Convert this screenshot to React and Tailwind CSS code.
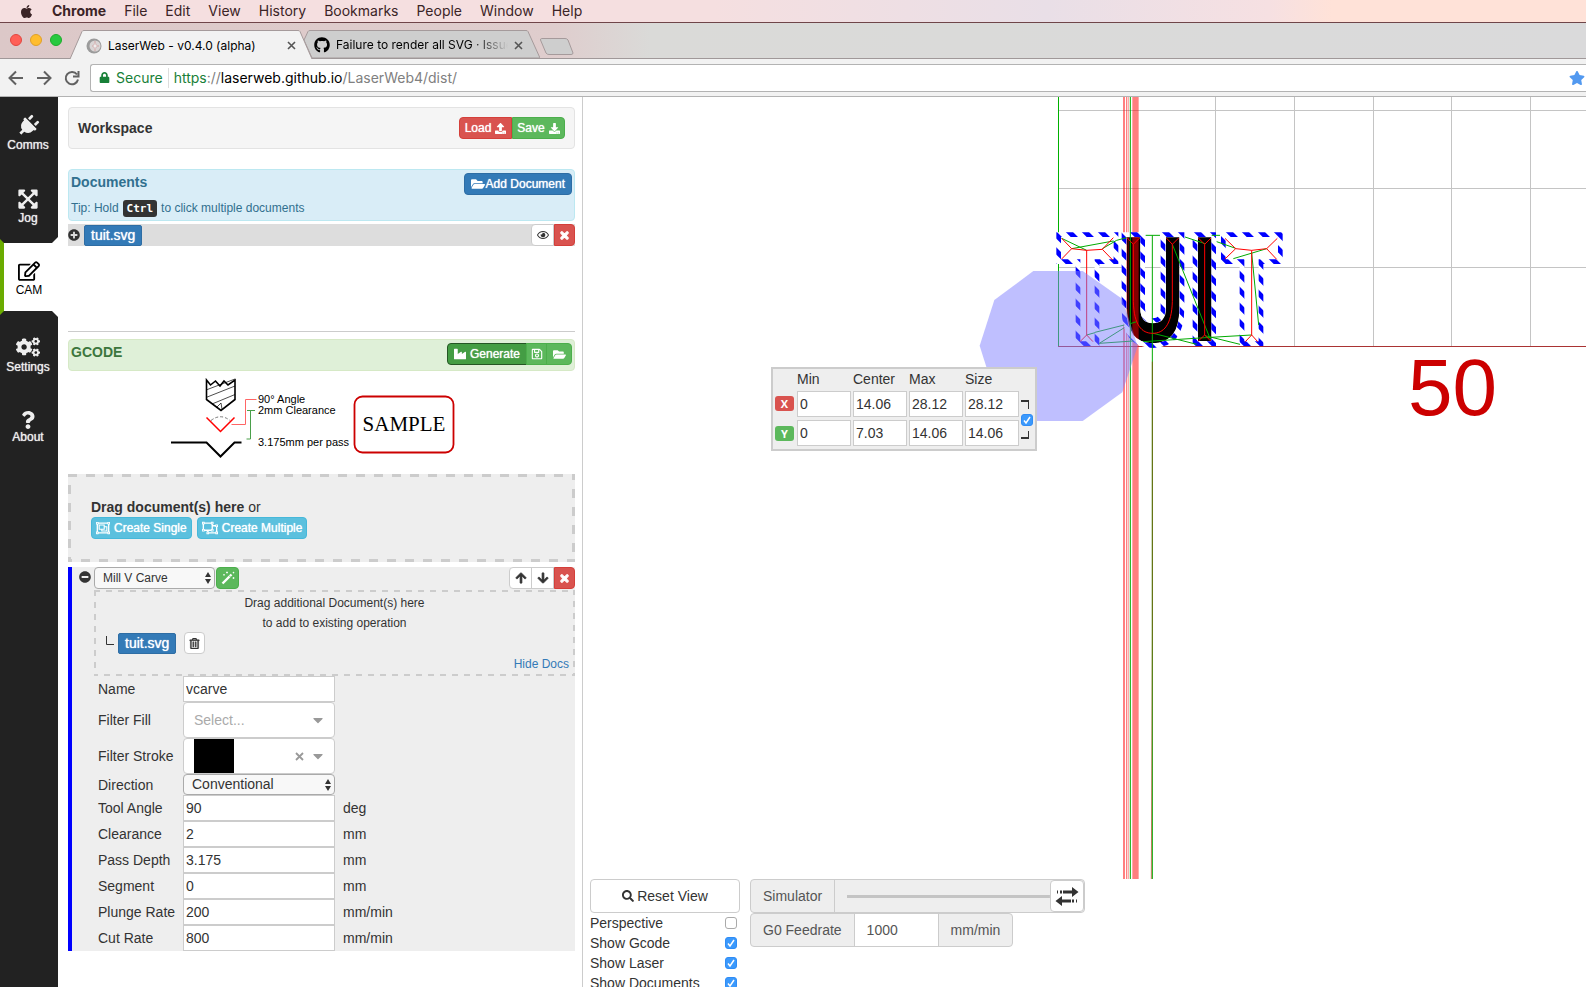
import {
  FaApple, FaGithub, FaLock, FaStar, FaPlug, FaExpandArrowsAlt, FaRegEdit, FaCogs, FaQuestion,
  FaUpload, FaDownload, FaFolderOpen, FaPlusCircle, FaMinusCircle, FaRegEye, FaTimes, FaRegSave,
  FaIndustry, FaRegObjectGroup, FaRegObjectUngroup, FaArrowUp, FaArrowDown, FaRegTrashAlt,
  FaSearch, FaCaretDown,
} from 'react-icons/fa';

const MENUS = ['File', 'Edit', 'View', 'History', 'Bookmarks', 'People', 'Window', 'Help'];

const PARAMS = [
  { id: 'angle', label: 'Tool Angle', value: '90', unit: 'deg' },
  { id: 'clearance', label: 'Clearance', value: '2', unit: 'mm' },
  { id: 'depth', label: 'Pass Depth', value: '3.175', unit: 'mm' },
  { id: 'segment', label: 'Segment', value: '0', unit: 'mm' },
  { id: 'plunge', label: 'Plunge Rate', value: '200', unit: 'mm/min' },
  { id: 'cut', label: 'Cut Rate', value: '800', unit: 'mm/min' },
];

const BTN = {
  red: 'bg-[#d9534f] border-[#d43f3a] text-white',
  green: 'bg-[#5cb85c] border-[#4cae4c] text-white',
  dark: 'bg-[#449d44] border-[#255625] text-white',
  blue: 'bg-[#337ab7] border-[#2e6da4] text-white',
  info: 'bg-[#5bc0de] border-[#46b8da] text-white',
  plain: 'bg-white border-[#ccc] text-[#333]',
};

function Btn({ color, className = 'rounded-sm px-[5px]', children, ...rest }) {
  const glow = color === 'plain' ? '' : '[text-shadow:0_0_1px_white]';
  return (
    <button
      className={`flex h-[22px] items-center justify-center gap-1 border text-xs whitespace-nowrap ${BTN[color]} ${glow} ${className}`}
      {...rest}
    >
      {children}
    </button>
  );
}

// Evenly dashed outline, the native dashed border is too tight for drop zones.
function DashedFrame({ width, dash }) {
  return (
    <svg className="pointer-events-none absolute inset-0 h-full w-full" aria-hidden="true">
      <rect width="100%" height="100%" fill="none" stroke="#ccc" strokeWidth={width * 2} strokeDasharray={dash} />
    </svg>
  );
}

function MenuBar() {
  return (
    <header className="flex h-[23px] shrink-0 items-center gap-[18px] border-b border-[#6f4549] bg-[linear-gradient(to_right,#f5dfe0_45%,#e9dfe7_66%,#f6e0e2_80%,#ffe2d8_84%)] px-[19px] font-[Inter,sans-serif] text-sm text-[#3b2426]">
      <FaApple className="size-[15px]" />
      <b>Chrome</b>
      {MENUS.map((m) => (
        <span key={m}>{m}</span>
      ))}
    </header>
  );
}

function TabStrip() {
  return (
    <div className="relative flex h-9 shrink-0 items-end border-b border-[#a09899] bg-[linear-gradient(to_right,#dcc8c8,#dfcdcd_35%,#dadad8_41%,#dadadb)] font-[Inter,sans-serif] text-xs text-black">
      <div className="flex h-9 w-[70px] items-center gap-2 pl-[10px]">
        <span className="size-3 rounded-full border border-[#e2463f] bg-[#ff5f57]" />
        <span className="size-3 rounded-full border border-[#e0a028] bg-[#ffbd2e]" />
        <span className="size-3 rounded-full border border-[#1dad2b] bg-[#28c940]" />
      </div>
      <div className="relative z-10 -mb-px h-[29px] w-[242px]">
        <svg className="absolute inset-0 h-full w-full" viewBox="0 0 242 29" preserveAspectRatio="none" aria-hidden="true">
          <path d="M0 29 L12 1.5 Q12.5 .5 14 .5 H228 Q229.500 .5 230 1.500 L242 29" fill="#f2f2f2" stroke="#a59a9b" />
        </svg>
        <div className="relative flex h-[31px] items-center gap-[6px] pr-[16px] pl-4">
          <svg className="size-4" viewBox="0 0 16 16" aria-hidden="true">
            <circle cx="8" cy="8" r="7.500" fill="#9b9b9b" />
            <circle cx="9" cy="8" r="5.500" fill="#d9d5d5" />
            <path d="M9 3l1 4 3 1-3 1-1 4-1-4-2-1 2-1z" fill="#eee" stroke="#c99" strokeWidth=".5" />
          </svg>
          <span className="flex-1 whitespace-nowrap">LaserWeb - v0.4.0 (alpha)</span>
          <CloseX />
        </div>
      </div>
      <div className="relative -ml-2 h-[28px] w-[236px]">
        <svg className="absolute inset-0 h-full w-full" viewBox="0 0 236 28" preserveAspectRatio="none" aria-hidden="true">
          <path d="M0 10 L4 1.500 Q4.500 .5 6 .5 H222 Q223.500 .5 224 1.500 L236 28 H8z" fill="#cecece" stroke="#a59a9b" />
        </svg>
        <div className="relative flex h-[30px] items-center gap-[6px] pr-[17px] pl-[10px]">
          <FaGithub className="size-4 shrink-0" />
          <span className="flex-1 overflow-hidden whitespace-nowrap [mask-image:linear-gradient(to_right,black_80%,transparent)]">
            Failure to render all SVG · Issue
          </span>
          <CloseX />
        </div>
      </div>
      <svg className="mb-[3px] h-[17px] w-[34px]" viewBox="0 0 34 17" aria-hidden="true">
        <path d="M1.500 .5 H25 Q27 .5 28 2 L33 15 Q33 16.500 31 16.500 H9 Q7 16.500 6 15 L.5 2 Q.5 .5 1.500 .5z" fill="#cecece" stroke="#a59a9b" />
      </svg>
    </div>
  );
}

function CloseX() {
  return (
    <svg className="size-[9px] shrink-0" viewBox="0 0 9 9" aria-hidden="true">
      <path d="M1 1l7 7M8 1l-7 7" stroke="#555" strokeWidth="1.600" />
    </svg>
  );
}

function AddressBar() {
  return (
    <div className="flex h-[38px] shrink-0 items-center border-b border-[#b3b3b3] bg-[#f2f2f2] font-[Inter,sans-serif] text-sm">
      <svg className="h-5 w-[90px]" viewBox="0 0 90 20" fill="none" stroke="#616161" strokeWidth="2" aria-hidden="true">
        <path d="M23 10H10M16 3.500L9.500 10l6.500 6.500" />
        <path d="M37 10h13M44 3.500l6.500 6.500-6.500 6.500" />
        <path d="M77 6.500A6.200 6.200 0 1 0 78 11.500M78.500 3v5.500H73" />
      </svg>
      <div className="flex h-7 flex-1 items-center rounded-l-[3px] border border-r-0 border-[#b3b3b3] bg-white pr-px pl-2 whitespace-nowrap">
        <FaLock className="mr-[6px] size-[11px] text-[#188038]" />
        <span className="text-[#188038]">Secure</span>
        <span className="mx-[5px] h-5 w-px bg-[#ddd]" />
        <a href="#url" className="flex-1 text-[#808080]">
          <span className="text-[#188038]">https</span>://<span className="text-black">laserweb.github.io</span>/LaserWeb4/dist/
        </a>
        <FaStar className="size-4 text-[#5299f0]" />
      </div>
    </div>
  );
}

function NavItem({ icon, label, active }) {
  return (
    <button
      className={
        active
          ? '-my-1 flex h-[76px] w-full flex-col items-center justify-center border-l-4 border-[#6aab00] bg-white pt-1 pr-1 text-xs text-black'
          : 'flex h-[73px] w-full flex-col items-center justify-center pr-[2px] text-xs text-[#eee] [text-shadow:0_0_1px_#eee]'
      }
    >
      {icon}
      {label}
    </button>
  );
}

function SideNav() {
  return (
    <nav className="flex w-[58px] shrink-0 flex-col bg-white">
      <div className="relative z-10 bg-[#222] [clip-path:polygon(0_0,100%_0,100%_calc(100%-6px),calc(100%-6px)_100%,4px_100%,0_calc(100%-4px))]">
        <NavItem icon={<FaPlug className="size-[22px] rotate-45" />} label="Comms" />
        <NavItem icon={<FaExpandArrowsAlt className="size-[22px]" />} label="Jog" />
      </div>
      <NavItem icon={<FaRegEdit className="size-[22px]" />} label="CAM" active />
      <div className="relative z-10 flex-1 bg-[#222] pt-[7px] [clip-path:polygon(4px_0,calc(100%-6px)_0,100%_6px,100%_100%,0_100%,0_4px)]">
        <NavItem icon={<FaCogs className="size-6" />} label="Settings" />
        <NavItem icon={<FaQuestion className="size-[18px]" />} label="About" />
      </div>
    </nav>
  );
}

function Tag() {
  return (
    <span className="flex h-[21px] items-center rounded-xs border border-[#2e6da4] bg-[#337ab7] px-[6px] text-sm text-white [text-shadow:0_0_1px_white]">
      tuit.svg
    </span>
  );
}

function Cross() {
  return <FaTimes className="size-[11px]" stroke="currentColor" strokeWidth={50} />;
}

function Wand() {
  return (
    <svg className="size-[14px]" viewBox="0 0 14 14" aria-hidden="true">
      <path d="M1.500 12.500L10.500 3.500" stroke="#fff" strokeWidth="2.400" />
      <path d="M8 4.500l1.500 1.500" stroke="#5cb85c" strokeWidth=".8" />
      <path d="M6 .5v2M5 1.500h2M12.500 6v2M11.500 7h2M12.500 .8v1.600M11.700 1.600h1.600M3 3v1.600M2.200 3.800h1.600" stroke="#fff" strokeWidth=".8" />
    </svg>
  );
}

function Documents() {
  return (
    <section className="h-[163px] border-b border-[#ccc]">
      <div className="h-[52px] rounded border border-[#bce8f1] bg-[#d9edf7] pr-[2px] pl-[2px] text-[#31708f]">
        <div className="flex items-start justify-between pt-[3px]">
          <h2 className="pt-px text-sm leading-4 font-bold">Documents</h2>
          <Btn color="blue" className="rounded-sm px-[6px]">
            <span className="flex items-center gap-px"><FaFolderOpen className="size-[14px]" />Add Document</span>
          </Btn>
        </div>
        <p className="flex h-[26px] items-center gap-1 text-xs">
          Tip: Hold
          <kbd className="rounded-[3px] bg-[#333] px-1 font-['DejaVu_Sans_Mono',monospace] text-[11px] leading-[17px] font-bold text-white">Ctrl</kbd>
          to click multiple documents
        </p>
      </div>
      <div className="mt-[3px] flex h-[22px] items-center bg-[#ddd]">
        <FaPlusCircle className="mr-1 size-3 text-[#333]" />
        <Tag />
        <div className="ml-auto flex">
          <Btn color="plain" className="w-[23px] rounded-l-sm" aria-label="Toggle visibility"><FaRegEye /></Btn>
          <Btn color="red" className="w-[21px] rounded-r-sm" aria-label="Remove"><Cross /></Btn>
        </div>
      </div>
    </section>
  );
}

function CutDiagram() {
  return (
    <svg className="mx-auto h-[103px] w-[300px]" viewBox="165 371 300 103" aria-hidden="true">
      <g fill="none" stroke="#000">
        <path d="M206.500 380l4 5 5-4 4.500 5 4-5 4 4 7-5v19.500l-14 11-14.500-11z" strokeWidth="1.600" />
        <path d="M206 390l29-11M206 397.500l29-11.500M212 404l23-9.500M216 408l5-5 1 6" strokeWidth=".7" />
        <path d="M171 442.500h35.500l14 14 14-14h7" strokeWidth="2" />
        <path d="M211 420.500q9.500-7.500 19 0" stroke="#777" strokeDasharray="3 2" />
        <path d="M206.500 417.500l14 14 14-14" stroke="#f00" strokeWidth="1.500" />
        <path d="M231.500 424.500h14v-25h11" stroke="#f66" />
        <path d="M247 410.500h8M250.500 410.500v28.500h-4" stroke="#4a9f4a" />
      </g>
      <g fontFamily="Liberation Sans, sans-serif" fontSize="11">
        <text x="258" y="403">90° Angle</text>
        <text x="258" y="414">2mm Clearance</text>
        <text x="258" y="446">3.175mm per pass</text>
      </g>
      <rect x="354.500" y="396.500" width="99" height="56" rx="8" fill="#fff" stroke="#c00" strokeWidth="1.800" />
      <text x="404" y="431" textAnchor="middle" fontFamily="Liberation Serif, serif" fontSize="21">SAMPLE</text>
    </svg>
  );
}

function SelectArrows() {
  return (
    <svg className="pointer-events-none absolute top-1/2 right-[4px] h-3 w-[6px] -translate-y-1/2" viewBox="0 0 6 12" aria-hidden="true">
      <path d="M3 0l3 5H0zM3 12l3-5H0z" fill="#333" />
    </svg>
  );
}

function Row({ id, label, unit, children }) {
  return (
    <div className="flex items-center">
      <label htmlFor={id} className="w-[85px] whitespace-nowrap">{label}</label>
      {children}
      {unit && <span className="pl-2">{unit}</span>}
    </div>
  );
}

function Field(props) {
  return <input className="h-[26px] w-[152px] border border-[#ccc] bg-white px-[2px] text-sm text-[#333]" {...props} />;
}

function Operation() {
  return (
    <section className="mt-[5px] border-l-4 border-[#00f] bg-[#eee] pl-[22px]">
      <div className="relative flex h-[23px] items-start">
        <FaMinusCircle className="absolute top-1 -left-[15px] size-3 text-[#333]" />
        <div className="relative mr-px">
          <select aria-label="Operation type" className="block h-[22px] w-[121px] appearance-none rounded border border-[#aaa] bg-[#f8f8f8] pl-2 text-xs text-[#333]">
            <option>Mill V Carve</option>
          </select>
          <SelectArrows />
        </div>
        <Btn color="green" className="w-[23px] rounded-sm" aria-label="Preset"><Wand /></Btn>
        <div className="ml-auto flex">
          <Btn color="plain" className="w-[23px] rounded-l-sm" aria-label="Move up"><FaArrowUp stroke="currentColor" strokeWidth={30} /></Btn>
          <Btn color="plain" className="-ml-px w-[23px]" aria-label="Move down"><FaArrowDown stroke="currentColor" strokeWidth={30} /></Btn>
          <Btn color="red" className="w-[21px] rounded-r-sm" aria-label="Remove operation"><Cross /></Btn>
        </div>
      </div>
      <div className="relative h-[86px] pt-[3px] text-center text-xs leading-5">
        <DashedFrame width={2} dash="6 6" />
        <p>Drag additional Document(s) here<br />to add to existing operation</p>
        <div className="flex h-5 items-center pl-3">
          <svg className="mr-1 h-[18px] w-2" viewBox="0 0 8 18" aria-hidden="true">
            <path d="M.5 2v8.500H8" fill="none" stroke="#333" />
          </svg>
          <Tag />
          <Btn color="plain" className="ml-2 w-[21px] rounded-sm" aria-label="Delete document"><FaRegTrashAlt className="size-[11px]" stroke="currentColor" strokeWidth={20} /></Btn>
        </div>
        <p className="pt-px pr-[6px] text-right"><a href="#docs" className="text-[#337ab7]">Hide Docs</a></p>
      </div>
      <div className="pl-1 text-sm">
        <Row id="name" label="Name"><Field id="name" defaultValue="vcarve" /></Row>
        <Row id="fill" label="Filter Fill">
          <button id="fill" className="flex h-9 w-[152px] items-center justify-between rounded border border-[#ccc] bg-white pr-2 pl-[10px] text-[#aaa]">
            Select...<FaCaretDown className="size-4 text-[#999]" />
          </button>
        </Row>
        <Row id="stroke" label="Filter Stroke">
          <button id="stroke" className="flex h-9 w-[152px] items-center rounded border border-[#ccc] bg-white pr-2 pl-[10px] text-[#999]">
            <span className="h-[34px] w-10 bg-black" />
            <svg className="mr-[6px] ml-auto size-[9px]" viewBox="0 0 9 9" aria-hidden="true">
              <path d="M1 1l7 7M8 1l-7 7" stroke="#999" strokeWidth="1.800" />
            </svg>
            <FaCaretDown className="size-4" />
          </button>
        </Row>
        <Row id="direction" label="Direction">
          <div className="relative">
            <select id="direction" className="block h-[21px] w-[152px] appearance-none rounded border border-[#aaa] bg-[#f8f8f8] pb-[2px] pl-2 text-sm leading-none text-[#333]">
              <option>Conventional</option>
            </select>
            <SelectArrows />
          </div>
        </Row>
        {PARAMS.map((p) => (
          <Row key={p.id} id={p.id} label={p.label} unit={p.unit}>
            <Field id={p.id} defaultValue={p.value} />
          </Row>
        ))}
      </div>
    </section>
  );
}

function CamPanel() {
  return (
    <main className="w-[525px] shrink-0 overflow-hidden border-r border-[#ccc] bg-white pt-[10px] pr-[7px] pl-[10px]">
      <section className="mb-5 flex h-[42px] items-center justify-between rounded border border-[#e3e3e3] bg-[#f5f5f5] px-[9px]">
        <h2 className="text-sm font-bold">Workspace</h2>
        <div className="flex">
          <Btn color="red" className="w-[53px] rounded-l-sm">Load <FaUpload className="size-[11px]" /></Btn>
          <Btn color="green" className="w-[53px] rounded-r-sm">Save <FaDownload className="size-[11px]" /></Btn>
        </div>
      </section>
      <Documents />
      <section className="mt-[7px] flex h-8 items-start justify-between rounded border border-[#d6e9c6] bg-[#dff0d8] px-[2px] pt-[3px]">
        <h2 className="text-sm leading-[18px] font-bold text-[#3c763d]">GCODE</h2>
        <div className="flex">
          <Btn color="dark" className="w-20 rounded-l-sm"><FaIndustry />Generate</Btn>
          <Btn color="green" className="-ml-px w-[21px]" aria-label="Save gcode"><FaRegSave /></Btn>
          <Btn color="green" className="-ml-px w-[26px] rounded-r-sm" aria-label="Open gcode"><FaFolderOpen className="size-[13px]" /></Btn>
        </div>
      </section>
      <div className="pr-[13px]">
        <CutDiagram />
      </div>
      <section className="relative h-22 bg-[#eee] px-[23px] pt-[23px]">
        <DashedFrame width={3} dash="9 9" />
        <p className="text-sm leading-5"><b>Drag document(s) here</b> or</p>
        <div className="flex gap-[5px]">
          <Btn color="info" className="rounded-sm px-1"><FaRegObjectGroup className="size-[14px]" />Create Single</Btn>
          <Btn color="info" className="rounded-sm px-1"><FaRegObjectUngroup className="size-4" />Create Multiple</Btn>
        </div>
      </section>
      <Operation />
    </main>
  );
}

const GRID_X = [1215.5, 1294.5, 1373.5, 1451.5, 1530.5];
const GRID_Y = [110.5, 188.5, 267.5];

const LETTERS = [
  'M266 419H438V500H381V746H324V500H266Z',
  'M462 419H518V640Q518 677 548 677Q579 677 579 640V419H636V640Q636 752 548 752Q462 752 462 640Z',
  'M675 419H731V746H675Z',
  'M760 419H931V500H873V746H816V500H760Z',
];

function Scene() {
  return (
    <svg className="absolute inset-0 h-full w-full" viewBox="583 97 1003 782" preserveAspectRatio="xMinYMin slice" aria-hidden="true">
      <defs>
        <pattern id="hatch" width="48" height="48" patternUnits="userSpaceOnUse">
          <path d="M20 0h22l48 48H68zM-28 0h22l48 48H20z" fill="#00f" />
        </pattern>
      </defs>
      <g stroke="#c4c4c4">
        {GRID_X.map((x) => <path key={x} d={`M${x} 97V346`} />)}
        {GRID_Y.map((y) => <path key={y} d={`M1058 ${y}H1586`} />)}
      </g>
      <path d="M1058 346.500H1586" stroke="#a33" />
      <path d="M1058.500 97V346" stroke="#00b000" />
      {/* toolpath geometry is kept at three units per pixel */}
      <g transform="translate(970 95) scale(.33333)">
        <path d="M471 427H511V640Q511 685 548 685Q588 685 588 640V427H628V640Q628 745 548 745Q471 745 471 640ZM684 427H725V738H684Z" />
        <g fill="#f00" fillOpacity=".5">
          <path d="M459 0h6v2352h-6zM468 0h3v2352h-3zM473 0h3v2352h-3zM487 0h19v2352h-19z" />
        </g>
        <g fill="none" strokeWidth="14">
          {LETTERS.map((d) => <path key={d} d={d} stroke="#fff" />)}
          {LETTERS.map((d) => <path key={d} d={d} stroke="url(#hatch)" />)}
        </g>
        <g fill="none" stroke="#0a0" strokeWidth="3">
          <path d="M481 0V2352M547 421V2352M527 421H570M725 421H750" />
          <path d="M275 430L350 466M305 461L430 438M397 461L440 436L470 428M481 686L500 680" />
          <path d="M607 448L722 735M645 426L705 446M740 440L797 460M790 491L890 461M845 473L866 690" />
          <path d="M520 740L705 728L845 720M550 715L680 748M705 722L810 748" />
          <path d="M350 720L375 713M375 712L463 690M388 745L463 698M388 745L490 738" />
        </g>
        <path d="M547 800V1600L544 2352" fill="none" stroke="#a33000" strokeOpacity=".6" strokeWidth="3" />
        <g fill="none" stroke="#f00" strokeWidth="3">
          <path d="M275 430L305 461L275 492M305 461L350 466L397 463M430 428L397 463L428 495M350 466V720M330 740L350 720L369 740" />
          <path d="M472 429L490 448L509 429M589 429L607 448L626 429M490 448V620C492 690 515 715 548 715S605 690 607 620V448" />
          <path d="M685 429L704 448L723 429M704 448V720M685 738L704 720L722 738" />
          <path d="M765 430L797 461L765 492M797 461L845 466L890 461M922 430L890 461L920 493M845 466V720M826 740L845 720L863 740" />
        </g>
        <path d="M190 528H338L457 612L503 754L457 892L338 978H190L73 892L29 752L73 615Z" fill="#8080ff" fillOpacity=".5" />
      </g>
      <text x="1408" y="415" fill="#c00" fontFamily="Liberation Sans, sans-serif" fontSize="80">50</text>
    </svg>
  );
}

const AXES = [
  { axis: 'X', color: 'bg-[#d9534f]', values: ['0', '14.06', '28.12', '28.12'] },
  { axis: 'Y', color: 'bg-[#5cb85c]', values: ['0', '7.03', '14.06', '14.06'] },
];

function BoundsBox() {
  return (
    <div className="absolute top-[270px] left-[188px] flex h-[84px] w-[266px] border-2 border-[#ccc] bg-[#eee] text-sm">
      <table className="mb-px border-separate border-spacing-x-[2px] border-spacing-y-0 text-left">
        <thead>
          <tr className="h-5">
            <th />
            {['Min', 'Center', 'Max', 'Size'].map((h) => (
              <th key={h} className="p-0 font-normal">{h}</th>
            ))}
          </tr>
        </thead>
        <tbody>
          {AXES.map((a) => (
            <tr key={a.axis} className="h-[29px]">
              <th className="p-0 pr-px">
                <span className={`block w-[19px] rounded-[3px] text-center font-['Open_Sans',sans-serif] text-[11px] leading-[15px] text-white ${a.color}`}>{a.axis}</span>
              </th>
              {a.values.map((v, i) => (
                <td key={i} className="p-0">
                  <input aria-label={`${a.axis} ${i}`} defaultValue={v} className="block h-[26px] w-[54px] border border-[#ccc] bg-white px-[2px] text-[#333]" />
                </td>
              ))}
            </tr>
          ))}
        </tbody>
      </table>
      <div className="flex flex-col items-start justify-end gap-1 pb-[9px]">
        <svg className="h-[10px] w-2" viewBox="0 0 8 10" fill="none" stroke="#333" aria-hidden="true"><path d="M0 1h8" strokeWidth="2" /><path d="M7.500 0v9" /></svg>
        <Check label="Lock proportions" defaultChecked />
        <svg className="h-[10px] w-2" viewBox="0 0 8 10" fill="none" stroke="#333" aria-hidden="true"><path d="M0 8h8" strokeWidth="2" /><path d="M7.500 1v8" /></svg>
      </div>
    </div>
  );
}

function Check({ label, ...rest }) {
  return (
    <span className="relative block size-3">
      <input type="checkbox" aria-label={label} className="peer block size-3 appearance-none rounded-[3px] border border-[#aaa] bg-white checked:border-[#2f8cf5] checked:bg-[#3b99fc]" {...rest} />
      <svg className="pointer-events-none absolute inset-0 hidden size-3 peer-checked:block" viewBox="0 0 12 12" aria-hidden="true">
        <path d="M3 6.500l2 2.500 4-6" fill="none" stroke="#fff" strokeWidth="1.500" />
      </svg>
    </span>
  );
}

const TOGGLES = [
  { label: 'Perspective', on: false },
  { label: 'Show Gcode', on: true },
  { label: 'Show Laser', on: true },
  { label: 'Show Documents', on: true },
];

function ViewControls() {
  return (
    <div className="flex h-27 shrink-0 items-start gap-[10px] overflow-hidden pl-[7px] text-sm">
      <div className="w-[150px] shrink-0">
        <button className="flex h-[34px] w-full items-center justify-center gap-[3px] rounded border border-[#ccc] bg-white">
          <FaSearch className="size-3" />Reset View
        </button>
        {TOGGLES.map((t) => (
          <label key={t.label} className="flex h-5 items-center justify-between pr-[3px]">
            {t.label}
            <Check label={t.label} defaultChecked={t.on} />
          </label>
        ))}
      </div>
      <div className="text-[#555]">
        <div className="flex h-[34px] w-[335px] items-stretch rounded border border-[#ccc] bg-[#eee]">
          <label htmlFor="sim" className="flex items-center border-r border-[#ccc] px-3">Simulator</label>
          <input
            id="sim"
            type="range"
            defaultValue="0"
            className="ml-3 min-w-0 flex-1 appearance-none bg-[linear-gradient(#c4c4c4,#c4c4c4)] bg-[length:100%_3px] bg-center bg-no-repeat [&::-webkit-slider-thumb]:appearance-none"
          />
          <button className="flex w-[34px] items-center justify-center rounded border border-[#ccc] bg-white" aria-label="Swap direction">
            <svg className="h-[19px] w-6" viewBox="0 0 24 19" fill="#333" aria-hidden="true">
              <path d="M2 3.500h1v3H2zM5 3.500h2v3H5zM8 3.500h3v3H8zM11 3.500h6V0l6.500 5L17 10V6.500h-6z" />
              <path d="M22 12.500h-1v3h1zM19 12.500h-2v3h2zM16 12.500h-3v3h3zM13 12.500H7V9L.5 14 7 19v-3.500h6z" />
            </svg>
          </button>
        </div>
        <div className="flex h-[34px] w-fit items-stretch rounded border border-[#ccc] bg-[#eee]">
          <label htmlFor="feed" className="flex items-center border-r border-[#ccc] px-3">G0 Feedrate</label>
          <input id="feed" defaultValue="1000" className="w-[83px] bg-white px-3 text-[#555]" />
          <span className="flex items-center border-l border-[#ccc] px-3">mm/min</span>
        </div>
      </div>
    </div>
  );
}

export default function App() {
  return (
    <div className="flex h-screen flex-col overflow-hidden bg-white font-['Liberation_Sans',Arial,sans-serif] text-[#333]">
      <MenuBar />
      <TabStrip />
      <AddressBar />
      <div className="flex min-h-0 flex-1">
        <SideNav />
        <CamPanel />
        <div className="flex min-w-0 flex-1 flex-col">
          <div className="relative min-h-0 flex-1 overflow-hidden">
            <Scene />
            <BoundsBox />
          </div>
          <ViewControls />
        </div>
      </div>
    </div>
  );
}
